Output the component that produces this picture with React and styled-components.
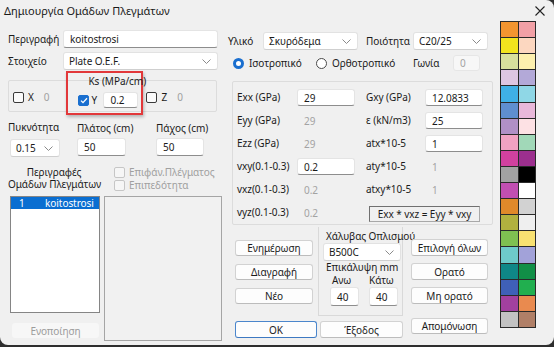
import React from 'react';
import styled, { createGlobalStyle } from 'styled-components';

const GlobalStyle = createGlobalStyle`
  html, body {
    margin: 0;
    padding: 0;
    background: #2e2e2e;
  }
  body {
    font-family: "Noto Sans", "Segoe UI", sans-serif;
    font-size: 10px;
    letter-spacing: -0.05px;
    color: #1b1b1b;
  }
  * {
    box-sizing: border-box;
  }
`;

const Window = styled.div`
  width: 554px;
  height: 345px;
  background: #f0f0f0;
  border-radius: 0 8px 8px 8px;
  overflow: hidden;
  display: flex;
  flex-direction: column;
`;

const TitleBar = styled.div`
  height: 21px;
  display: flex;
  align-items: center;
  justify-content: space-between;
  padding: 0 9px 0 4px;
  font-size: 11px;
  letter-spacing: 0;
  color: #1a1a1a;
`;

const Body = styled.div`
  flex: 1;
  display: flex;
`;

const LeftCol = styled.div`
  width: 214px;
  margin-left: 8px;
  padding-top: 9px;
  display: flex;
  flex-direction: column;
`;

const RightCol = styled.div`
  width: 265px;
  margin-left: 6px;
  padding-top: 11px;
  display: flex;
  flex-direction: column;
`;

const Row = styled.div`
  display: flex;
  align-items: center;
  margin-top: ${(p) => p.$mt || 0}px;
  margin-left: ${(p) => p.$ml || 0}px;
`;

const Label = styled.div`
  width: ${(p) => (p.$w ? `${p.$w}px` : 'auto')};
  margin-left: ${(p) => p.$ml || 0}px;
  color: ${(p) => (p.$dim ? '#a0a0a0' : '#1b1b1b')};
  white-space: nowrap;
  line-height: 13px;
`;

const TextBox = styled.div`
  width: ${(p) => p.$w}px;
  height: ${(p) => p.$h || 18}px;
  margin-left: ${(p) => p.$ml || 0}px;
  background: #fff;
  border: 1px solid #e4e4e4;
  border-bottom-color: #8d8d8d;
  border-radius: 3px;
  padding-left: 6px;
  display: flex;
  align-items: center;
  white-space: nowrap;
`;

const DimBox = styled.div`
  width: ${(p) => p.$w}px;
  height: ${(p) => p.$h || 17}px;
  background: ${(p) => (p.$framed ? '#f7f7f7' : 'transparent')};
  border: 1px solid ${(p) => (p.$framed ? '#e6e6e6' : 'transparent')};
  border-radius: 3px;
  padding-left: 6px;
  display: flex;
  align-items: center;
  color: #a3a3a3;
`;

const SelectBox = styled.div`
  width: ${(p) => p.$w}px;
  height: 18px;
  margin-left: ${(p) => p.$ml || 0}px;
  background: #fff;
  border: 1px solid #e2e2e2;
  border-bottom-color: #cfcfcf;
  border-radius: 3px;
  padding: 0 6px 0 5px;
  display: flex;
  align-items: center;
  justify-content: space-between;
  white-space: nowrap;
`;

const Chevron = () => (
  <svg width="9" height="5" viewBox="0 0 9 5">
    <polyline points="0.5,0.5 4.5,4.5 8.5,0.5" fill="none" stroke="#8a8a8a" strokeWidth="1" />
  </svg>
);

const Select = ({ w, ml, children }) => (
  <SelectBox $w={w} $ml={ml}>
    <span>{children}</span>
    <Chevron />
  </SelectBox>
);

const Check = styled.div`
  width: 11px;
  height: 11px;
  flex: none;
  border-radius: 2px;
  border: 1px solid ${(p) => (p.$off ? '#c6c6c6' : '#3a3a3a')};
  background: ${(p) => (p.$on ? '#1a6fcf' : p.$off ? '#f6f6f6' : '#fbfbfb')};
  border-color: ${(p) => (p.$on ? '#1a6fcf' : undefined)};
  margin-left: ${(p) => p.$ml || 0}px;
  display: flex;
  align-items: center;
  justify-content: center;
`;

const Tick = () => (
  <svg width="8" height="7" viewBox="0 0 8 7">
    <polyline points="1,3.6 3,5.6 7,1.2" fill="none" stroke="#fff" strokeWidth="1.3" />
  </svg>
);

const Radio = styled.div`
  width: 11px;
  height: 11px;
  flex: none;
  border-radius: 50%;
  border: ${(p) => (p.$on ? '3px solid #1a6fcf' : '1px solid #4a4a4a')};
  background: #fff;
`;

const KsGroup = styled.div`
  width: 209px;
  height: 32px;
  margin-top: 10px;
  border: 1px solid #dcdcdc;
  border-radius: 2px;
  display: flex;
  align-items: flex-start;
  padding-left: 4px;
`;

const KsItem = styled.div`
  display: flex;
  align-items: center;
  margin-top: 10px;
  margin-left: ${(p) => p.$ml || 0}px;
`;

const RedBox = styled.div`
  width: 77px;
  height: 44px;
  margin-top: -10px;
  margin-left: ${(p) => p.$ml || 0}px;
  border: 2px solid #e2383a;
  box-shadow: 1px 2px 3px rgba(0, 0, 0, 0.25);
  padding: 2px 0 0 10px;
  display: flex;
  flex-direction: column;
`;

const Caption = styled.div`
  margin-left: 10px;
  line-height: 13px;
  white-space: nowrap;
`;

const FieldCol = styled.div`
  width: ${(p) => (p.$w ? `${p.$w}px` : 'auto')};
  display: flex;
  flex-direction: column;
  gap: ${(p) => p.$gap ?? 4}px;
`;

const DescRow = styled.div`
  display: flex;
  margin-top: 9px;
`;

const DescTitle = styled.div`
  width: 92px;
  text-align: center;
  line-height: 12px;
  white-space: nowrap;
`;

const DimChecks = styled.div`
  margin-left: 14px;
  display: flex;
  flex-direction: column;
`;

const ListRow = styled.div`
  display: flex;
  margin-top: 4px;
`;

const ListCol = styled.div`
  display: flex;
  flex-direction: column;
  margin-left: 2px;
`;

const ListBox = styled.div`
  width: 90px;
  height: 117px;
  background: #fff;
  border: 1px solid #858585;
`;

const ListItem = styled.div`
  height: 12px;
  background: #0a6ed1;
  color: #fff;
  display: flex;
  align-items: center;
  line-height: 12px;
  span:first-child {
    width: 34px;
    padding-left: 8px;
  }
`;

const EmptyPane = styled.div`
  width: 118px;
  height: 145px;
  margin-left: 4px;
  border: 1px solid #a5a5a5;
  background: #f1f1f1;
`;

const Button = styled.div`
  width: ${(p) => p.$w}px;
  height: ${(p) => p.$h || 16}px;
  margin-left: ${(p) => p.$ml || 0}px;
  margin-top: ${(p) => p.$mt || 0}px;
  background: ${(p) => (p.$off ? '#f7f7f7' : '#fdfdfd')};
  color: ${(p) => (p.$off ? '#9c9c9c' : '#1b1b1b')};
  border: 1px solid ${(p) => (p.$primary ? '#4b86cc' : p.$off ? '#f7f7f7' : '#d2d2d2')};
  border-bottom-color: ${(p) => (p.$primary ? '#3d79c2' : p.$off ? '#f7f7f7' : '#bcbcbc')};
  border-radius: 3px;
  display: flex;
  align-items: center;
  justify-content: center;
  white-space: nowrap;
`;

const RadioItem = styled.div`
  width: ${(p) => p.$w}px;
  display: flex;
  align-items: center;
  gap: 5px;
`;

const MatGroup = styled.div`
  width: 261px;
  height: 144px;
  margin: 10px 0 0 4px;
  border: 1px solid #dcdcdc;
  border-radius: 2px;
  padding: 7px 0 0 4px;
  display: grid;
  grid-template-columns: 60px 69px 59px 58px;
  grid-auto-rows: 17px;
  row-gap: 6px;
  align-items: center;
`;

const Formula = styled.div`
  grid-column: 3 / span 2;
  width: 111px;
  height: 16px;
  margin: 2px 0 0 3px;
  border: 1px solid #a8a8a8;
  border-top-color: #707070;
  border-left-color: #707070;
  display: flex;
  align-items: center;
  justify-content: center;
  white-space: nowrap;
`;

const Bottom = styled.div`
  display: grid;
  grid-template-columns: 83px 93px 77px;
  grid-template-rows: 91px 20px;
  row-gap: 2px;
  margin-left: 7px;
`;

const ButtonStack = styled.div`
  display: flex;
  flex-direction: column;
  gap: ${(p) => p.$gap}px;
  padding-top: ${(p) => p.$pt}px;
`;

const SteelBox = styled.div`
  width: 85px;
  margin-top: 2px;
  border: 1px solid #d9d9d9;
  border-top: none;
  padding: 3px 0 0 4px;
  display: flex;
  flex-direction: column;
`;

const CoverRow = styled.div`
  display: flex;
  gap: 10px;
  margin-left: 7px;
`;

const Palette = styled.div`
  width: 36px;
  height: 307px;
  margin-left: 7px;
  display: grid;
  grid-template-columns: 1fr 1fr;
  grid-template-rows: repeat(19, 1fr);
  gap: 1px;
  padding: 1px;
  background: #2a2a2a;
`;

const Swatch = styled.div`
  background: ${(p) => p.$c};
`;

const swatches = [
  '#f29530', '#f2a0a6',
  '#f2e41e', '#fcd7c0',
  '#d8e09c', '#fdf0ae',
  '#ddc6e2', '#b3a9d8',
  '#3fb0e6', '#8fd7e6',
  '#5f8fd0', '#e8b8da',
  '#b090c6', '#fde1e4',
  '#f0a2c2', '#a1d8b8',
  '#d1419f', '#9c2f8e',
  '#a2a2a2', '#000000',
  '#c24fb2', '#ffffff',
  '#e0892a', '#d2d2d2',
  '#b1b13f', '#efefef',
  '#7fc051', '#f8e171',
  '#6ecaca', '#a2a2d9',
  '#0f8787', '#118f47',
  '#3f60b8', '#21af4f',
  '#a2409f', '#e98a4f',
  '#c2c2c2', '#b07f67',
];

const App = () => (
  <>
    <GlobalStyle />
    <Window>
      <TitleBar>
        <span>Δημιουργία Ομάδων Πλεγμάτων</span>
        <svg width="10" height="10" viewBox="0 0 10 10">
          <path d="M0.5 0.5 L9.5 9.5 M9.5 0.5 L0.5 9.5" stroke="#222" strokeWidth="1.1" />
        </svg>
      </TitleBar>
      <Body>
        <LeftCol>
          <Row>
            <Label $w={55}>Περιγραφή</Label>
            <TextBox $w={155}>koitostrosi</TextBox>
          </Row>
          <Row $mt={4}>
            <Label $w={55}>Στοιχείο</Label>
            <Select w={155}>Plate O.E.F.</Select>
          </Row>
          <KsGroup>
            <KsItem>
              <Check />
              <Label $ml={4}>X</Label>
              <Label $ml={10} $dim>0</Label>
            </KsItem>
            <RedBox $ml={17}>
              <Caption>Ks (MPa/cm)</Caption>
              <Row $mt={4}>
                <Check $on>
                  <Tick />
                </Check>
                <Label $ml={2} $w={12}>Y</Label>
                <TextBox $w={35} $h={16}>0.2</TextBox>
              </Row>
            </RedBox>
            <KsItem $ml={3}>
              <Check />
              <Label $ml={4}>Z</Label>
              <Label $ml={10} $dim>0</Label>
            </KsItem>
          </KsGroup>
          <Row $mt={9}>
            <FieldCol $w={69} $gap={5}>
              <Label>Πυκνότητα</Label>
              <Select w={50} ml={2}>0.15</Select>
            </FieldCol>
            <FieldCol $w={79} $gap={3}>
              <Label>Πλάτος (cm)</Label>
              <TextBox $w={49}>50</TextBox>
            </FieldCol>
            <FieldCol $gap={3}>
              <Label>Πάχος (cm)</Label>
              <TextBox $w={48}>50</TextBox>
            </FieldCol>
          </Row>
          <DescRow>
            <DescTitle>
              Περιγραφές
              <br />
              Ομάδων Πλεγμάτων
            </DescTitle>
            <DimChecks>
              <Row>
                <Check $off />
                <Label $ml={4} $dim>Επιφάν.Πλέγματος</Label>
              </Row>
              <Row>
                <Check $off />
                <Label $ml={4} $dim>Επιπεδότητα</Label>
              </Row>
            </DimChecks>
          </DescRow>
          <ListRow>
            <ListCol>
              <ListBox>
                <ListItem>
                  <span>1</span>
                  <span>koitostrosi</span>
                </ListItem>
              </ListBox>
              <Button $w={87} $h={15} $ml={2} $mt={10} $off>Ενοποίηση</Button>
            </ListCol>
            <EmptyPane />
          </ListRow>
        </LeftCol>

        <RightCol>
          <Row>
            <Label $w={35}>Υλικό</Label>
            <Select w={95}>Σκυρόδεμα</Select>
            <Label $w={47} $ml={8}>Ποιότητα</Label>
            <Select w={75}>C20/25</Select>
          </Row>
          <Row $mt={5} $ml={5}>
            <RadioItem $w={83}>
              <Radio $on />
              <span>Ισοτροπικό</span>
            </RadioItem>
            <RadioItem $w={97}>
              <Radio />
              <span>Ορθοτροπικό</span>
            </RadioItem>
            <Label $w={40}>Γωνία</Label>
            <DimBox $w={27} $h={16} $framed>0</DimBox>
          </Row>
          <MatGroup>
            <Label>Exx (GPa)</Label>
            <TextBox $w={58} $h={17}>29</TextBox>
            <Label>Gxy (GPa)</Label>
            <TextBox $w={58} $h={17}>12.0833</TextBox>

            <Label>Eyy (GPa)</Label>
            <DimBox $w={58}>29</DimBox>
            <Label>ε (kN/m3)</Label>
            <TextBox $w={58} $h={17}>25</TextBox>

            <Label>Ezz (GPa)</Label>
            <DimBox $w={58}>29</DimBox>
            <Label>atx*10-5</Label>
            <TextBox $w={58} $h={17}>1</TextBox>

            <Label>vxy(0.1-0.3)</Label>
            <TextBox $w={58} $h={17}>0.2</TextBox>
            <Label>aty*10-5</Label>
            <DimBox $w={58}>1</DimBox>

            <Label>vxz(0.1-0.3)</Label>
            <DimBox $w={58}>0.2</DimBox>
            <Label>atxy*10-5</Label>
            <DimBox $w={58}>1</DimBox>

            <Label>vyz(0.1-0.3)</Label>
            <DimBox $w={58}>0.2</DimBox>
            <Formula>Exx * vxz = Eyy * vxy</Formula>
          </MatGroup>
          <Bottom>
            <ButtonStack $pt={15} $gap={8}>
              <Button $w={78}>Ενημέρωση</Button>
              <Button $w={78}>Διαγραφή</Button>
              <Button $w={78}>Νέο</Button>
            </ButtonStack>
            <SteelBox>
              <Label $ml={3}>Χάλυβας Οπλισμού</Label>
              <Select w={78}>B500C</Select>
              <Label $ml={3}>Επικάλυψη mm</Label>
              <CoverRow>
                <FieldCol $gap={0}>
                  <Label $ml={2}>Ανω</Label>
                  <TextBox $w={29} $h={19}>40</TextBox>
                </FieldCol>
                <FieldCol $gap={0}>
                  <Label>Κάτω</Label>
                  <TextBox $w={29} $h={19}>40</TextBox>
                </FieldCol>
              </CoverRow>
            </SteelBox>
            <ButtonStack $pt={14} $gap={7}>
              <Button $w={77} $h={17}>Επιλογή όλων</Button>
              <Button $w={77} $h={17}>Ορατό</Button>
              <Button $w={77} $h={17}>Μη ορατό</Button>
            </ButtonStack>
            <Button $w={82} $h={17} $mt={3} $primary>OK</Button>
            <Button $w={83} $h={17} $mt={3} $ml={2}>Έξοδος</Button>
            <Button $w={77} $h={16}>Απομόνωση</Button>
          </Bottom>
        </RightCol>

        <Palette>
          {swatches.map((c, i) => (
            <Swatch key={i} $c={c} />
          ))}
        </Palette>
      </Body>
    </Window>
  </>
);

export default App;
